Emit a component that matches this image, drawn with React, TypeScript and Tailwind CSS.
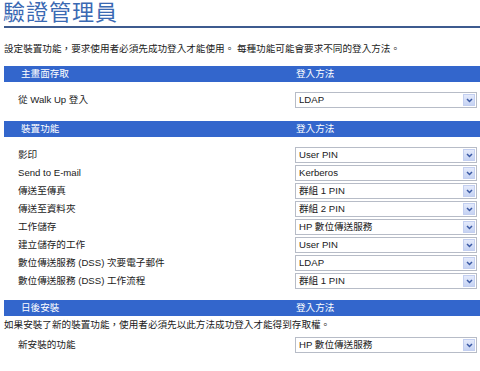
import React from "react";

const font = { fontFamily: '"Liberation Sans", "Noto Sans CJK TC", sans-serif' };

function Select({ value }: { value: string }) {
  return (
    <div className="flex h-[16px] w-[182px] items-center border border-[#b7bcc7] bg-white">
      <span className="flex-1 pl-[3px] leading-[14px] text-[#1a1a1a]">{value}</span>
      <span className="mr-[1px] flex h-[12px] w-[12px] items-center justify-center border border-[#c3cff0] bg-gradient-to-b from-[#e4eafb] to-[#c6d3f3]">
        <svg width="7" height="5" viewBox="0 0 7 5">
          <path d="M1 1 L3.5 3.5 L6 1" fill="none" stroke="#3b5aa4" strokeWidth="1.5" />
        </svg>
      </span>
    </div>
  );
}

function Header({ left }: { left: string }) {
  return (
    <div className="ml-[4px] flex h-[16px] items-center bg-[#3366cc] text-white">
      <span className="w-[292px] pl-[17px]">{left}</span>
      <span>登入方法</span>
    </div>
  );
}

function Row({ label, value }: { label: string; value: string }) {
  return (
    <div className="flex h-[16px] items-center pl-[18px]">
      <span className="w-[277px] text-[#1a1a1a]">{label}</span>
      <Select value={value} />
    </div>
  );
}

const deviceRows = [
  ["影印", "User PIN"],
  ["Send to E-mail", "Kerberos"],
  ["傳送至傳真", "群組 1 PIN"],
  ["傳送至資料夾", "群組 2 PIN"],
  ["工作儲存", "HP 數位傳送服務"],
  ["建立儲存的工作", "User PIN"],
  ["數位傳送服務 (DSS) 次要電子郵件", "LDAP"],
  ["數位傳送服務 (DSS) 工作流程", "群組 1 PIN"],
];

export default function App() {
  return (
    <div style={font} className="h-[371px] w-[480px] overflow-hidden bg-white text-[9.6px] leading-[14px]">
      <div className="h-[26px] pl-[3px] text-[22px] leading-[26px] tracking-[1px] text-[#3a69b3]">驗證管理員</div>
      <div className="ml-[4px] h-[2px] bg-[#3d5b8f]" />
      <div className="h-[38px] pl-[4px] pt-[14px] text-[#1a1a1a]">
        設定裝置功能，要求使用者必須先成功登入才能使用。 每種功能可能會要求不同的登入方法。
      </div>

      <Header left="主畫面存取" />
      <div className="mt-[10px]">
        <Row label="從 Walk Up 登入" value="LDAP" />
      </div>

      <div className="mt-[13px]">
        <Header left="裝置功能" />
      </div>
      <div className="mt-[10px] flex flex-col gap-[2px]">
        {deviceRows.map(([label, value]) => (
          <Row key={label} label={label} value={value} />
        ))}
      </div>

      <div className="mt-[11px]">
        <Header left="日後安裝" />
      </div>
      <div className="flex h-[18px] items-center pl-[4px] text-[#1a1a1a]">
        如果安裝了新的裝置功能，使用者必須先以此方法成功登入才能得到存取權。
      </div>
      <div className="mt-[3px]">
        <Row label="新安裝的功能" value="HP 數位傳送服務" />
      </div>
    </div>
  );
}
